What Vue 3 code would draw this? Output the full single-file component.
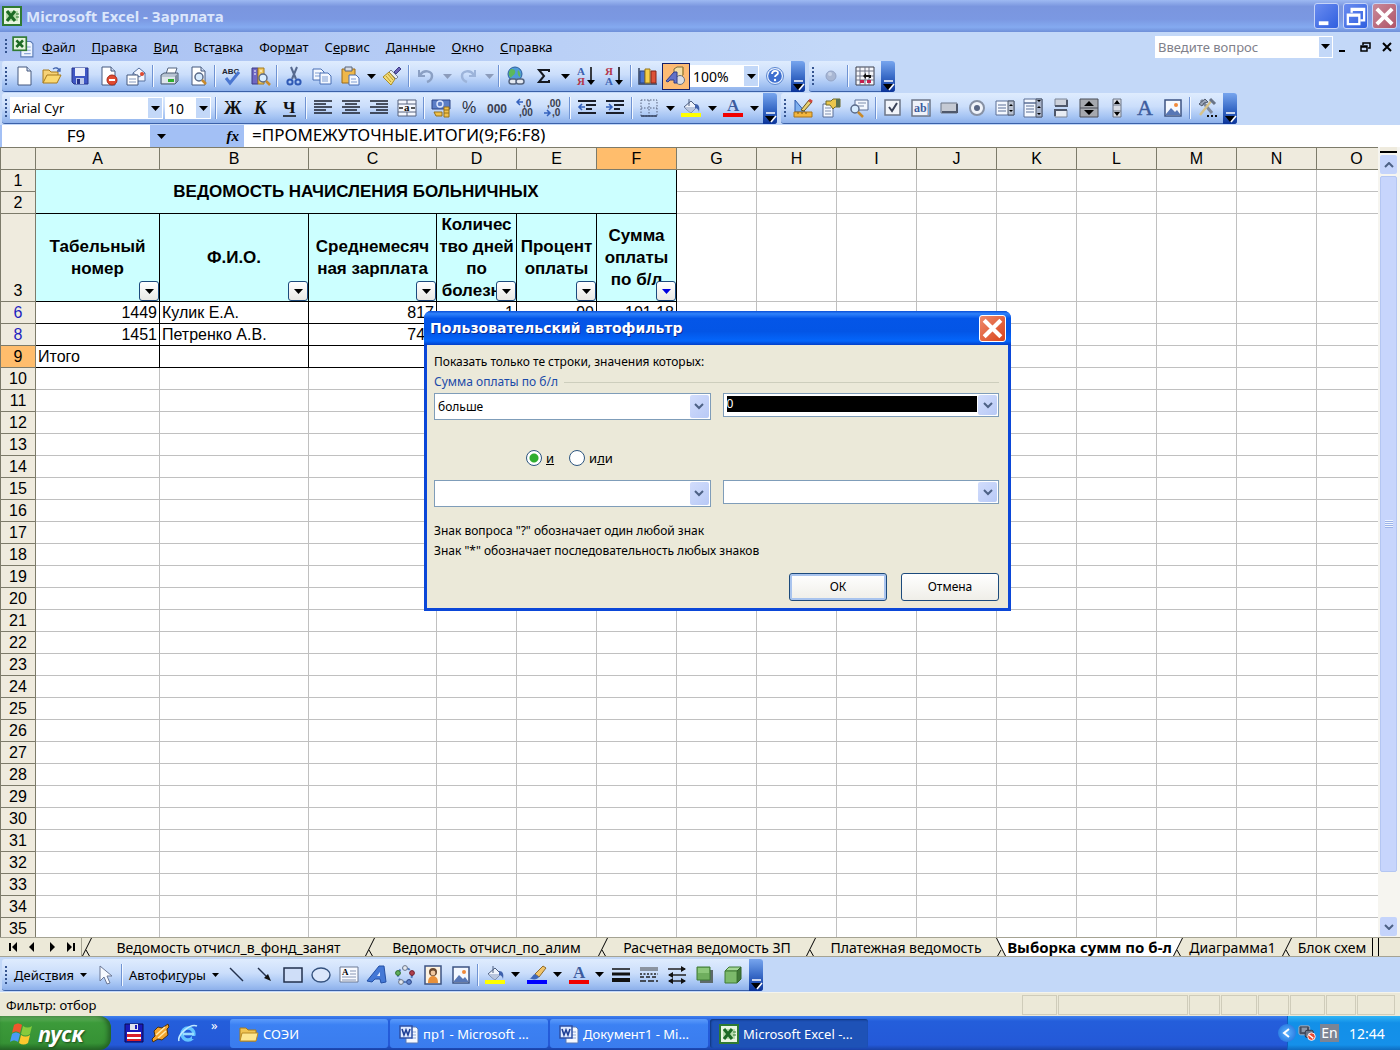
<script setup>
import { ref } from 'vue'

const paper = '<path d="M4 1h9l4 4v14H4z" fill="#fff" stroke="#44597f"/><path d="M13 1v4h4" fill="#cfdcf2" stroke="#44597f"/>'
const disk = '<path d="M2 2h16v16H4l-2-2z" fill="#3f57c4" stroke="#27348b"/><path d="M5 2h10v8H5z" fill="#e8edfb"/><path d="M6 12h8v6H6z" fill="#bcc8ea"/><path d="M7 13h3v5H7z" fill="#27348b"/>'
const bars = (rows, weight = 2) => rows.map(([y, x, w]) => `<path d="M${x + 1} ${y}h${w}" stroke="#1b1f2b" stroke-width="${weight}"/>`).join('')
const lens = (x, y) => `<circle cx="${x}" cy="${y}" r="4" fill="#d8ecff" stroke="#5a6a88" stroke-width="1.5"/><path d="M${x + 3} ${y + 3}l4 4" stroke="#c98a2b" stroke-width="2.5"/>`
const bucket = '<path d="M3 9l7-6 6 6-6 6z" fill="#eef3fb" stroke="#4a5d80"/><path d="M3 9h13l-6 6z" fill="#b9c6de"/><path d="M8 1v7" stroke="#4a5d80"/><path d="M14 6c4 0 5 3 4 8-1-3-2-4-4-4z" fill="#3f62ad"/>'
const picture = '<path d="M2 2h16v16H2z" fill="#f4f8ff" stroke="#3c5382" stroke-width="1.5"/><circle cx="13" cy="7" r="2" fill="#f0893a"/><path d="M3 16l5-6 4 4 2-2 3 4v1H3z" fill="#5877b5"/>'
const excel = '<rect x="1" y="1" width="18" height="18" fill="#e9f5e2" stroke="#2f7a32" stroke-width="2"/><path d="M4 5h12v10H4z" fill="#b9dcae"/><path d="M5 5l8 10M13 5L5 15" stroke="#1d6a25" stroke-width="3"/><path d="M14 8h3M14 11h3" stroke="#2f7a32"/>'
const excelDoc = '<path d="M8 5h9l2 2v12H8z" fill="#eef4ff" stroke="#5a7ab5"/><path d="M11 10h6M11 13h6M11 16h6" stroke="#8ba6d6"/><rect x="1" y="1" width="12" height="12" fill="#e4f3dc" stroke="#2f7a32" stroke-width="1.5"/><path d="M4 4l6 6M10 4l-6 6" stroke="#1d6a25" stroke-width="2.4"/>'
const word = '<path d="M7 3h10l2 2v14H7z" fill="#f4f8ff" stroke="#5a7ab5"/><path d="M12 8h5M12 11h5M12 14h5" stroke="#8ba6d6"/><rect x="1" y="2" width="12" height="12" fill="#dfe9ff" stroke="#2c4fa5" stroke-width="1.5"/><path d="M3 5l2 6 2-5 2 5 2-6" fill="none" stroke="#1f3f96" stroke-width="1.6"/>'

const icons = {
  excel, excelDoc, word, disk, picture,
  page: paper,
  open: '<path d="M1 17V4h6l2 2h7v3" fill="#f6d277" stroke="#a87a1c"/><path d="M1 17l4-8h14l-4 8z" fill="#fbd972" stroke="#a87a1c"/><path d="M11 3c3-2 5-1 6 1m1-2v3h-3" fill="none" stroke="#3f62ad" stroke-width="1.3"/>',
  perm: paper + '<circle cx="14" cy="14" r="5" fill="#e04a30" stroke="#a52a1a"/><path d="M11 14h6" stroke="#fff" stroke-width="2"/>',
  mail: '<path d="M7 7l6-5 6 5v8H7z" fill="#f4f7ff" stroke="#56709f"/><path d="M7 7l6 4 6-4" fill="none" stroke="#56709f"/><path d="M1 9h11v10H1z" fill="#fff" stroke="#44597f"/><path d="M3 13h7M3 16h7" stroke="#8498bd"/><circle cx="16" cy="8" r="2" fill="#e04a30"/>',
  print: '<path d="M6 8l2-6h9l-2 6z" fill="#fff" stroke="#55657f"/><path d="M1 9l3-2h14v8l-3 3H1z" fill="#b8c4d2" stroke="#4c5c74"/><path d="M2 11h13v6H2z" fill="#dfe6ec"/><path d="M8 13h6v3H8z" fill="#2fae2f"/><path d="M15 10l3-2v7l-3 2z" fill="#7f8da1"/>',
  preview: paper + lens(11, 11),
  spell: '<text x="0" y="8" font-family="Liberation Sans" font-size="8" font-weight="700" fill="#20242e">ABC</text><path d="M4 12l4 5 9-11" fill="none" stroke="#4a76d0" stroke-width="3"/>',
  research: '<path d="M2 2h6v16H2z" fill="#6f67c4" stroke="#3d3a86"/><path d="M8 2h6v16H8z" fill="#f2c75e" stroke="#a37a1f"/><path d="M4 5h2M4 8h2M10 5h2" stroke="#fff"/>' + lens(13, 12),
  cut: '<path d="M7 1l5 12M13 1L8 13" stroke="#56698e" stroke-width="2"/><circle cx="6" cy="16" r="2.6" fill="none" stroke="#2f59b5" stroke-width="2"/><circle cx="14" cy="16" r="2.6" fill="none" stroke="#2f59b5" stroke-width="2"/>',
  copy: '<path d="M1 3h8l3 3v8H1z" fill="#f4f8ff" stroke="#486fb4"/><path d="M3 7h6M3 10h5" stroke="#7f9dd2"/><path d="M8 7h8l3 3v8H8z" fill="#f4f8ff" stroke="#486fb4"/><path d="M10 11h6M10 13h6M10 15h6" stroke="#7f9dd2"/>',
  paste: '<path d="M2 3h13v14H2z" fill="#eeb74a" stroke="#9a6b19"/><path d="M5 1h7v4H5z" fill="#d7dce6" stroke="#596579"/><path d="M9 9h7l3 3v7H9z" fill="#f4f8ff" stroke="#486fb4"/><path d="M11 13h5M11 16h6" stroke="#7f9dd2"/>',
  brush: '<path d="M12 6l5-5 2 2-5 5z" fill="#6a63b8" stroke="#3d3a86"/><path d="M9 4l7 7-2 2-7-7z" fill="#e8ecf4" stroke="#7a859c"/><path d="M7 6l6 7-4 6-8-8z" fill="#f4dc78" stroke="#a98c25"/><path d="M4 10l5 6M6 8l5 6" stroke="#b99a30"/>',
  undo: '<path d="M3 4v6h6" fill="none" stroke="#8ba0c4" stroke-width="2"/><path d="M4 9c4-6 12-4 12 1 0 3-2 5-5 6" fill="none" stroke="#8ba0c4" stroke-width="2.5"/>',
  redo: '<path d="M17 4v6h-6" fill="none" stroke="#9db4da" stroke-width="2"/><path d="M16 9c-4-6-12-4-12 1 0 3 2 5 5 6" fill="none" stroke="#9db4da" stroke-width="2.5"/>',
  link: '<circle cx="9" cy="8" r="7" fill="#4f9ad8" stroke="#2b5f9c"/><path d="M5 3c3 0 5 1 4 4s-3 2-4 5c-3-3-3-6 0-9zM12 4c2 2 3 4 2 7-2-1-3-4-2-7z" fill="#5cb85a"/><rect x="3" y="13" width="8" height="5" rx="2.5" fill="#e5eaf2" stroke="#55647e" stroke-width="1.5"/><rect x="10" y="13" width="8" height="5" rx="2.5" fill="#e5eaf2" stroke="#55647e" stroke-width="1.5"/>',
  sum: '<path d="M15 6V4H5l5 6-5 6h10v-2" fill="none" stroke="#15181f" stroke-width="2"/>',
  sortA: '<text x="1" y="9" font-family="Liberation Serif" font-size="11" font-weight="700" fill="#3a5fb0">А</text><text x="1" y="19" font-family="Liberation Serif" font-size="11" font-weight="700" fill="#b5384a">Я</text><path d="M15 1v15" stroke="#111" stroke-width="1.6"/><path d="M11 14h8l-4 5z"/>',
  sortZ: '<text x="1" y="9" font-family="Liberation Serif" font-size="11" font-weight="700" fill="#b5384a">Я</text><text x="1" y="19" font-family="Liberation Serif" font-size="11" font-weight="700" fill="#3a5fb0">А</text><path d="M15 1v15" stroke="#111" stroke-width="1.6"/><path d="M11 14h8l-4 5z"/>',
  chart: '<path d="M1 2v16h18" fill="none" stroke="#33415e" stroke-width="1.5"/><path d="M2 5h5v12H2z" fill="#4b74cf" stroke="#27407e"/><path d="M7 3h5v14H7z" fill="#f5cf4a" stroke="#967418"/><path d="M13 5h5v12h-5z" fill="#dd5138" stroke="#842718"/>',
  drawing: '<path d="M8 3l3-2h6v8l-3 3H8z" fill="#f3e0a8" stroke="#7e6a3c"/><path d="M14 12l3-3V1" fill="none" stroke="#b18a3a"/><circle cx="14" cy="14" r="4.5" fill="#d9dde4" stroke="#69707e"/><path d="M0 15l8-9h3v11H8v-3H4l-2 2z" fill="#6272c8" stroke="#303c87"/>',
  help: '<circle cx="10" cy="10" r="8.5" fill="#e8f1ff" stroke="#5b86cf"/><circle cx="10" cy="10" r="6.8" fill="#3e6fd0"/><path d="M7 8c0-4 6-4 6-1 0 2-3 2-3 4" fill="none" stroke="#fff" stroke-width="1.8"/><circle cx="10" cy="14" r="1.2" fill="#fff"/>',
  record: '<circle cx="10" cy="10" r="5" fill="#a9b7d3" stroke="#94a4c6"/><circle cx="9" cy="8" r="2" fill="#c7d2e8"/>',
  macro: '<path d="M1 1h18v18H1z" fill="#f5f6fa" stroke="#3b3f4d"/><path d="M5 1v18M10 1v18M14 1v18M1 5h18M1 10h18M1 14h18" stroke="#6c7386"/><path d="M5 14h4v3H5zM12 14h4v3h-4z" fill="#c4204e"/><path d="M8 10l3-3v2h5v3h-2v-1h-3v2z" fill="#111"/>',
  bold: '<text x="1" y="16" font-family="Liberation Serif" font-size="18" font-weight="700" fill="#111">Ж</text>',
  italic: '<text x="3" y="16" font-family="Liberation Serif" font-size="18" font-weight="700" font-style="italic" fill="#111">К</text>',
  under: '<text x="4" y="15" font-family="Liberation Serif" font-size="17" font-weight="700" fill="#111">Ч</text><path d="M4 18h13" stroke="#111" stroke-width="1.5"/>',
  left: bars([[3, 0, 18], [6, 0, 12], [9, 0, 18], [12, 0, 12], [15, 0, 18]], 1.5),
  center: bars([[3, 0, 18], [6, 3, 12], [9, 0, 18], [12, 3, 12], [15, 0, 18]], 1.5),
  right: bars([[3, 0, 18], [6, 6, 12], [9, 0, 18], [12, 6, 12], [15, 0, 18]], 1.5),
  merge: '<path d="M1 2h18v16H1z" fill="#f5f8ff" stroke="#56637e"/><path d="M1 6h18M1 14h18M10 2v4M10 14v4" stroke="#56637e"/><path d="M2 10h4M14 10h4" stroke="#222" stroke-width="1.5"/><text x="7" y="13" font-family="Liberation Serif" font-size="11" font-weight="700" fill="#111">a</text>',
  currency: '<path d="M1 2h18v9H1z" fill="#5c7ec6" stroke="#2c4585"/><circle cx="9" cy="6" r="3" fill="none" stroke="#dce7ff" stroke-width="1.4"/><path d="M13 9h5v10h-5z" fill="#f2c24a" stroke="#94701b"/><path d="M13 12h5M13 15h5" stroke="#94701b"/><path d="M3 14h8v4H5z" fill="#f2c24a" stroke="#94701b"/>',
  percent: '<text x="3" y="15" font-family="Liberation Sans" font-size="16" fill="#2b3040">%</text>',
  zeros: '<text x="0" y="15" font-family="Liberation Sans" font-size="12" font-weight="700" fill="#3a4050">000</text>',
  inc: '<text x="8" y="9" font-family="Liberation Sans" font-size="10" font-weight="700" fill="#3a4050">,0</text><text x="4" y="18" font-family="Liberation Sans" font-size="10" font-weight="700" fill="#3a4050">,00</text><path d="M8 4H2m3-3L2 4l3 3" fill="none" stroke="#3562bd" stroke-width="1.5"/>',
  dec: '<text x="4" y="9" font-family="Liberation Sans" font-size="10" font-weight="700" fill="#3a4050">,00</text><text x="9" y="18" font-family="Liberation Sans" font-size="10" font-weight="700" fill="#3a4050">,0</text><path d="M1 15h6m-3-3l3 3-3 3" fill="none" stroke="#3562bd" stroke-width="1.5"/>',
  outdent: bars([[3, 0, 18], [7, 8, 10], [11, 8, 6], [15, 0, 18]]) + '<path d="M8 9H2m3-3L2 9l3 3" fill="none" stroke="#3562bd" stroke-width="1.6"/>',
  indent: bars([[3, 0, 18], [7, 8, 10], [11, 8, 6], [15, 0, 18]]) + '<path d="M1 9h6M4 6l3 3-3 3" fill="none" stroke="#3562bd" stroke-width="1.6"/>',
  borders: '<path d="M2 2h16v16H2zM10 2v16M2 10h16" fill="none" stroke="#56637e" stroke-dasharray="1.5 1.5"/><path d="M2 18h16" stroke="#33415e" stroke-width="1.5"/>',
  fill: bucket + '<path d="M0 15h20v4H0z" fill="#ffff00"/>',
  lineColor: '<path d="M8 9l8-8 3 2-7 9z" fill="#f0c36a" stroke="#8e6a2a"/><path d="M2 13c3 1 4-4 6-4l4 3c-2 3-6 3-10 1z" fill="#4068b8"/><path d="M0 15h20v4H0z" fill="#0000ff"/>',
  fontColor: '<text x="4" y="13" font-family="Liberation Serif" font-size="17" font-weight="700" fill="#3d5c9e">А</text><path d="M0 15h20v4H0z" fill="#f00000"/>',
  design: '<path d="M2 2v12h10z" fill="#7fb0ee" stroke="#2d5bb0"/><path d="M1 14h18v5H1z" fill="#f3b63e" stroke="#a8741a"/><path d="M5 14v2M9 14v2M13 14v2" stroke="#7e5613"/><path d="M8 12l8-10 3 2-8 9z" fill="#e9d173" stroke="#65541e"/><path d="M16 2l3 2" stroke="#d0453d" stroke-width="3"/>',
  props: '<path d="M2 6h10v13H2z" fill="#f4f8ff" stroke="#5b6f96"/><path d="M4 10h6M4 13h6M4 16h6" stroke="#7f8fae"/><path d="M5 3h5l2-2h7v8h-5l-2 2-3-4H5z" fill="#eac64b" stroke="#6f6a2c"/><path d="M15 1h4v8h-4z" fill="#5b7350"/>',
  code: '<path d="M6 2h13v10H6z" fill="#f4f8ff" stroke="#5b6f96"/><path d="M9 5h8M9 8h6" stroke="#7f8fae"/><circle cx="6" cy="11" r="4" fill="#d8ecff" stroke="#5a6a88" stroke-width="1.5"/><path d="M9 14l5 5" stroke="#c98a2b" stroke-width="2.5"/>',
  check: '<path d="M2 2h15v15H2z" fill="#f1f4fa" stroke="#6c7688" stroke-width="1.5"/><path d="M6 9l3 4 5-8" fill="none" stroke="#3a4258" stroke-width="2"/>',
  ab: '<path d="M1 2h18v16H1z" fill="#eef2fa" stroke="#6c7688" stroke-width="1.5"/><text x="3" y="14" font-family="Liberation Serif" font-size="12" font-weight="700" fill="#3d5c9e">ab|</text>',
  button: '<path d="M2 5h16v10H2z" fill="#c5cad4" stroke="#6c7688"/><path d="M3 14h15V6" fill="none" stroke="#4f586b" stroke-width="2"/>',
  radio: '<circle cx="10" cy="10" r="7" fill="#f1f4fa" stroke="#8791a4" stroke-width="2"/><circle cx="10" cy="10" r="3" fill="#5a6784"/>',
  listbox: '<path d="M1 3h18v14H1z" fill="#f4f8ff" stroke="#5b6f96"/><path d="M3 7h8M3 10h8M3 13h8" stroke="#5b6f96"/><path d="M13 3h6v14h-6z" fill="#b9c2d2" stroke="#4f586b"/><path d="M14 8l2-2 2 2zM14 12l2 2 2-2z"/>',
  combo: '<path d="M1 1h18v4H1zM1 5h18v14H1z" fill="#f4f8ff" stroke="#5b6f96"/><path d="M3 8h8M3 11h8M3 14h8" stroke="#5b6f96"/><path d="M13 1h6v18h-6z" fill="#a9b4cb" stroke="#4f586b"/><path d="M14 2l2 2 2-2zM14 10l2-2 2 2zM14 15l2 2 2-2z"/>',
  toggle: '<path d="M4 1h12v7H4z" fill="#cdd2dc" stroke="#7b8496"/><path d="M4 8h12V2" fill="none" stroke="#4f586b" stroke-width="2"/><path d="M4 12h12v7H4z" fill="#e8ecf3" stroke="#7b8496"/><path d="M4 18v-6h12" fill="none" stroke="#4f586b" stroke-width="2"/>',
  spin: '<path d="M1 1h18v18H1z" fill="#a5a8ae" stroke="#4b4f58"/><path d="M1 10h18" stroke="#4b4f58"/><path d="M5 8l5-5 5 5zM5 12l5 5 5-5z"/>',
  scroll: '<path d="M6 1h8v18H6z" fill="#d8dce4" stroke="#6c7688"/><path d="M6 7h8M6 13h8" stroke="#6c7688"/><path d="M7 6l3-4 3 4zM7 14l3 4 3-4z"/>',
  letter: '<text x="2" y="17" font-family="Liberation Serif" font-size="22" fill="#3d5c9e" stroke="#3d5c9e" stroke-width=".5">A</text>',
  tools: '<path d="M4 2l11 13" stroke="#7f899c" stroke-width="3"/><path d="M2 6l6-5 3 3-4 1-2 3z" fill="#9aa5b8" stroke="#515b6e"/><path d="M15 2L3 17" stroke="#d6c38c" stroke-width="2.4"/><path d="M13 1l5 5" stroke="#697488" stroke-width="3"/><path d="M10 18h2M14 18h2M18 18h2" stroke="#111" stroke-width="2"/>',
  cursor: '<path d="M5 1v15l4-4 3 7 3-1-3-7h5z" fill="#f7faff" stroke="#6a7795"/>',
  line: '<path d="M3 3l13 13" stroke="#22304c" stroke-width="1.4"/>',
  arrow: '<path d="M3 3l10 10" stroke="#22304c" stroke-width="1.4"/><path d="M16 16l-7-3 4-4z" fill="#111"/>',
  rect: '<path d="M1 3h18v14H1z" fill="#cfdef8" stroke="#22304c" stroke-width="1.5"/>',
  oval: '<ellipse cx="10" cy="10" rx="9" ry="7" fill="#dbe7fb" stroke="#33507c" stroke-width="1.4"/>',
  textbox: '<path d="M1 2h18v15H1z" fill="#f8faff" stroke="#6d7a95"/><text x="3" y="10" font-family="Liberation Serif" font-size="9" font-weight="700">A</text><path d="M11 6h6M11 9h6M3 12h14M3 15h14" stroke="#8796b4"/>',
  wordart: '<path d="M0 16L12 1h5l2 16-5 1-1-4H8l-3 3z" fill="#4478d6" stroke="#2450a5"/><path d="M10 11l3-4v4z" fill="#dbe8ff"/>',
  diagram: '<circle cx="10" cy="10" r="7" fill="none" stroke="#4e78bd" stroke-width="2" stroke-dasharray="3 2"/><circle cx="10" cy="3" r="2.4" fill="#e3e8f0" stroke="#6c7688"/><circle cx="3" cy="8" r="2.4" fill="#5fae5c" stroke="#2f6f2f"/><circle cx="17" cy="8" r="2.4" fill="#b0404c" stroke="#702030"/><circle cx="6" cy="17" r="2.4" fill="#e3e8f0" stroke="#6c7688"/><circle cx="14" cy="17" r="2.4" fill="#5a7fc8" stroke="#2c4585"/>',
  clip: '<path d="M2 1h16v18H2z" fill="#fdf3e1" stroke="#3c5382" stroke-width="1.5"/><path d="M5 18c0-5 2-7 5-7s5 2 5 7z" fill="#e8903a"/><circle cx="10" cy="7" r="4" fill="#6b4a30"/><circle cx="10" cy="8" r="2.4" fill="#f1c9a0"/>',
  weights: '<path d="M1 4h18" stroke="#111" stroke-width="1.5"/><path d="M1 9h18" stroke="#111" stroke-width="3"/><path d="M1 15h18" stroke="#111" stroke-width="4"/>',
  dashes: '<path d="M1 3h18M1 5h18" stroke="#444"/><path d="M1 9h18" stroke="#222" stroke-width="1.5" stroke-dasharray="2 1.5"/><path d="M1 12h18" stroke="#222" stroke-width="1.5" stroke-dasharray="4 2"/><path d="M1 16h18" stroke="#222" stroke-width="1.5" stroke-dasharray="6 2"/>',
  arrows: '<path d="M1 4h17M2 10h17M2 16h16" stroke="#222" stroke-width="1.5"/><path d="M14 1l5 3-5 3zM6 7l-5 3 5 3zM6 13l-5 3 5 3zM14 13l5 3-5 3z" fill="#111"/>',
  shadow: '<path d="M5 5h13v13H5z" fill="#5d6a6a"/><path d="M2 2h13v13H2z" fill="#6fae5e" stroke="#3f7a34"/><path d="M3 3h11v5H3z" fill="#8cc77a"/>',
  cube: '<path d="M2 6l4-4h12l-4 4z" fill="#a5d796" stroke="#3f7a34"/><path d="M14 6l4-4v12l-4 4z" fill="#417a38" stroke="#33622b"/><path d="M2 6h12v12H2z" fill="#7cba6b" stroke="#3f7a34"/>',
  folder: '<path d="M1 17V4h6l2 2h8v11z" fill="#f0c452" stroke="#a87a1c"/><path d="M3 9h16l-2 8H1z" fill="#fde690" stroke="#b98a24"/>',
  save2: '<path d="M1 1h18v18H1z" fill="#1a1ab8" stroke="#0a0a50"/><path d="M6 1h8v6H6z" fill="#dfe3ee"/><path d="M11 2h2v4h-2z" fill="#1a1ab8"/><path d="M3 9h14v9H3z" fill="#fff"/><path d="M3 11h14v3H3zM3 16h14v2H3z" fill="#d8202a"/>',
  pencil: '<path d="M3 8l4-4 4 1 6-4 1 3-2 2 1 6-6 5-4-1-5 3-1-3 3-3z" fill="#f2a32c" stroke="#4a3210"/><path d="M5 12L14 4M7 15l8-7" stroke="#ffe9a8" stroke-width="1.6"/>',
  ie: '<circle cx="10" cy="11" r="6" fill="none" stroke="#63c3ff" stroke-width="3.4"/><path d="M5 11h11" stroke="#9bdcff" stroke-width="2.6"/><path d="M14 13h5v3h-5z" fill="#245edb"/><path d="M1 18C-1 12 12 0 19 3" fill="none" stroke="#bfe9ff" stroke-width="1.6"/>',
  tray: '<rect x="1" y="2" width="12" height="10" rx="2" fill="#474f60" stroke="#aab5c8"/><path d="M4 4h6v5H4z" fill="#8c97aa"/><rect x="8" y="7" width="9" height="8" rx="2" fill="#6b7588" stroke="#2c3444"/><circle cx="15" cy="14" r="4.2" fill="#e84a34" stroke="#fff"/><path d="M12 12l5 4" stroke="#fff" stroke-width="1.5"/>',
}

const b = (icon, label, extra = {}) => ({ type: 'button', icon, label, ...extra })
const sep = { type: 'sep' }
const drop = { type: 'drop' }
const dim = { type: 'drop', dim: true }

const toolRows = [
  [
    [b('page', 'Создать'), b('open', 'Открыть'), b('disk', 'Сохранить'), b('perm', 'Разрешения'), b('mail', 'Сообщение'), sep,
      b('print', 'Печать'), b('preview', 'Предварительный просмотр'), sep, b('spell', 'Орфография'), b('research', 'Справочные материалы'), sep,
      b('cut', 'Вырезать'), b('copy', 'Копировать'), b('paste', 'Вставить'), drop, b('brush', 'Формат по образцу'), sep,
      b('undo', 'Отменить'), dim, b('redo', 'Вернуть'), dim, sep,
      b('link', 'Гиперссылка'), b('sum', 'Автосумма'), drop, b('sortA', 'По возрастанию'), b('sortZ', 'По убыванию'), sep,
      b('chart', 'Мастер диаграмм'), b('drawing', 'Рисование', { on: true }),
      { type: 'select', value: '100%', label: 'Масштаб', size: 'zoom' }, b('help', 'Помощь')],
    [b('record', 'Записать макрос'), sep, b('macro', 'Относительная ссылка')],
  ],
  [
    [{ type: 'select', value: 'Arial Cyr', label: 'Шрифт', size: 'font' }, { type: 'select', value: '10', label: 'Размер', size: 'points' }, sep,
      b('bold', 'Полужирный'), b('italic', 'Курсив'), b('under', 'Подчеркнутый'), sep,
      b('left', 'По левому краю'), b('center', 'По центру'), b('right', 'По правому краю'), b('merge', 'Объединить'), sep,
      b('currency', 'Денежный формат'), b('percent', 'Процентный формат'), b('zeros', 'Формат с разделителями'), b('inc', 'Увеличить разрядность'), b('dec', 'Уменьшить разрядность'), sep,
      b('outdent', 'Уменьшить отступ'), b('indent', 'Увеличить отступ'), sep,
      b('borders', 'Границы'), drop, b('fill', 'Цвет заливки'), drop, b('fontColor', 'Цвет шрифта'), drop],
    [b('design', 'Режим конструктора'), b('props', 'Свойства'), b('code', 'Исходный текст'), sep,
      b('check', 'Флажок'), b('ab', 'Поле'), b('button', 'Кнопка'), b('radio', 'Переключатель'), b('listbox', 'Список'), b('combo', 'Поле со списком'),
      b('toggle', 'Выключатель'), b('spin', 'Счетчик'), b('scroll', 'Полоса прокрутки'), b('letter', 'Надпись'), b('picture', 'Рисунок'), sep, b('tools', 'Другие элементы')],
  ],
]

const drawItems = [
  { type: 'menu', text: ['Дейс', 'т', 'вия'] }, b('cursor', 'Выбор объектов'), sep,
  { type: 'menu', text: ['Автофи', 'г', 'уры'] },
  b('line', 'Линия'), b('arrow', 'Стрелка'), b('rect', 'Прямоугольник'), b('oval', 'Овал'), b('textbox', 'Надпись'), b('wordart', 'WordArt'),
  b('diagram', 'Диаграмма'), b('clip', 'Картинка'), b('picture', 'Рисунок'), sep,
  b('fill', 'Цвет заливки'), drop, b('lineColor', 'Цвет линий'), drop, b('fontColor', 'Цвет шрифта'), drop,
  b('weights', 'Тип линии'), b('dashes', 'Тип штриха'), b('arrows', 'Вид стрелки'), b('shadow', 'Тень'), b('cube', 'Объем'),
]

const menus = [
  ['', 'Ф', 'айл'], ['', 'П', 'равка'], ['', 'В', 'ид'], ['Вст', 'а', 'вка'], ['Фор', 'м', 'ат'],
  ['С', 'е', 'рвис'], ['', 'Д', 'анные'], ['', 'О', 'кно'], ['', 'С', 'правка'],
]

const columns = 'ABCDEFGHIJKLMNO'.split('')
const heads = [
  ['Табельный', 'номер'], ['Ф.И.О.'], ['Среднемесяч', 'ная зарплата'],
  ['Количес', 'тво дней', 'по', 'болезни'], ['Процент', 'оплаты'], ['Сумма', 'оплаты', 'по б/л'],
]
const people = [
  { n: 6, cells: ['1449', 'Кулик Е.А.', '817', '1', '90', '101,18'] },
  { n: 8, cells: ['1451', 'Петренко А.В.', '745', '', '', ''] },
  { n: 9, cells: ['Итого', '', '', '', '', ''] },
]
const emptyRows = Array.from({ length: 26 }, (_, i) => i + 10)

const tabs = [
  { name: 'Ведомость отчисл_в_фонд_занят', width: 283 },
  { name: 'Ведомость отчисл_по_алим', width: 233 },
  { name: 'Расчетная ведомость ЗП', width: 208 },
  { name: 'Платежная ведомость', width: 190 },
  { name: 'Выборка сумм по б-л', width: 177, active: true },
  { name: 'Диаграмма1', width: 109 },
  { name: 'Блок схем', width: 90 },
]
const tasks = [
  { icon: 'folder', name: 'СОЭИ' },
  { icon: 'word', name: 'пр1 - Microsoft ...' },
  { icon: 'word', name: 'Документ1 - Mi...' },
  { icon: 'excel', name: 'Microsoft Excel -...', active: true },
]
const statusBoxes = [35, 130, 31, 36, 31, 35, 30, 38]
const quick = [['save2', 'Сохранение'], ['pencil', 'Проигрыватель'], ['ie', 'Internet Explorer']]

const join = ref('and')
const formula = ref('=ПРОМЕЖУТОЧНЫЕ.ИТОГИ(9;F6:F8)')
const cellName = ref('F9')
</script>

<template>
  <div class="desktop">
    <header class="titlebar">
      <svg class="app-icon" viewBox="0 0 20 20" v-html="icons.excel"></svg>
      <h1>Microsoft Excel - Зарплата</h1>
      <button class="win-btn" aria-label="Свернуть"><svg viewBox="0 0 24 24"><path d="M4 17h10v4H4z" fill="#fff" /></svg></button>
      <button class="win-btn" aria-label="Восстановить"><svg viewBox="0 0 24 24"><path d="M8 8V4h13v12h-4M8 5h13" fill="none" stroke="#fff" stroke-width="2.4" /><path d="M4 10h12v10H4zM4 11h12" fill="none" stroke="#fff" stroke-width="2.4" /></svg></button>
      <button class="win-btn close" aria-label="Закрыть"><svg viewBox="0 0 24 24"><path d="M4 4l16 16M20 4L4 20" stroke="#fff" stroke-width="4" /></svg></button>
    </header>

    <nav class="menubar">
      <i class="grip"></i>
      <svg class="doc-icon" viewBox="0 0 20 20" v-html="icons.excelDoc"></svg>
      <a v-for="m in menus" :key="m[2]" href="#">{{ m[0] }}<u>{{ m[1] }}</u>{{ m[2] }}</a>
      <div class="ask">
        <input type="text" placeholder="Введите вопрос" aria-label="Введите вопрос">
        <button aria-label="Список вопросов"><svg class="tri" viewBox="0 0 9 5"><path d="M0 0h9L4.500 5z" /></svg></button>
      </div>
      <div class="mdi">
        <button aria-label="Свернуть книгу"><svg viewBox="0 0 12 12"><path d="M2 10h6" stroke="#000" stroke-width="2" /></svg></button>
        <button aria-label="Восстановить книгу"><svg viewBox="0 0 12 12"><path d="M4 4V2h7v5H9M4 2h7M2 5h6v5H2zM2 6h6" fill="none" stroke="#000" stroke-width="1.5" /></svg></button>
        <button aria-label="Закрыть книгу"><svg viewBox="0 0 12 12"><path d="M2 2l8 8M10 2l-8 8" stroke="#000" stroke-width="2" /></svg></button>
      </div>
    </nav>

    <div v-for="(row, r) in toolRows" :key="r" class="tool-row">
      <div v-for="(bar, n) in row" :key="n" class="toolbar">
        <i class="grip"></i>
        <template v-for="(item, i) in bar" :key="i">
          <button v-if="item.type === 'button'" class="tool" :class="{ on: item.on }" :aria-label="item.label">
            <svg viewBox="0 0 20 20" v-html="icons[item.icon]"></svg>
          </button>
          <i v-else-if="item.type === 'sep'" class="sep"></i>
          <button v-else-if="item.type === 'drop'" class="drop" :class="{ dim: item.dim }" aria-label="Список">
            <svg class="tri" viewBox="0 0 9 5"><path d="M0 0h9L4.500 5z" /></svg>
          </button>
          <span v-else class="pick" :class="item.size">
            <select :aria-label="item.label"><option>{{ item.value }}</option></select>
            <span class="pick-arrow"><svg class="tri" viewBox="0 0 9 5"><path d="M0 0h9L4.500 5z" /></svg></span>
          </span>
        </template>
        <button class="more" aria-label="Параметры панелей"><svg viewBox="0 0 14 14"><path d="M3 3h9" stroke="#fff" stroke-width="1.5" /><path d="M2 6h10l-5 6z" /><path d="M8 12l5-6" stroke="#fff" stroke-width="1.5" /></svg></button>
      </div>
    </div>

    <div class="formula-bar">
      <input v-model="cellName" class="name-box" type="text" aria-label="Имя ячейки">
      <button class="name-drop" aria-label="Список имен"><svg class="tri" viewBox="0 0 9 5"><path d="M0 0h9L4.500 5z" /></svg></button>
      <span class="fx">fx</span>
      <input v-model="formula" class="formula" type="text" aria-label="Строка формул">
    </div>

    <main class="sheet">
      <div class="grid">
        <table>
          <colgroup>
            <col class="c-num"><col class="c-a"><col class="c-b"><col class="c-c"><col v-for="n in 12" :key="n" class="c-std">
          </colgroup>
          <thead>
            <tr><th></th><th v-for="c in columns" :key="c" :class="{ sel: c === 'F' }">{{ c }}</th></tr>
          </thead>
          <tbody>
            <tr>
              <th>1</th>
              <td class="banner" rowspan="2" colspan="6">ВЕДОМОСТЬ НАЧИСЛЕНИЯ БОЛЬНИЧНЫХ</td>
              <td v-for="n in 9" :key="n"></td>
            </tr>
            <tr><th>2</th><td v-for="n in 9" :key="n"></td></tr>
            <tr class="heads">
              <th>3</th>
              <td v-for="(h, i) in heads" :key="i" class="head">
                <div v-for="line in h" :key="line">{{ line }}</div>
                <button class="filter" :class="{ used: i === 5 }" aria-label="Автофильтр"><svg class="tri" viewBox="0 0 9 5"><path d="M0 0h9L4.500 5z" /></svg></button>
              </td>
              <td v-for="n in 9" :key="n"></td>
            </tr>
            <tr v-for="p in people" :key="p.n" class="data">
              <th :class="p.n === 9 ? 'sel' : 'filtered'">{{ p.n }}</th>
              <td v-for="(c, i) in p.cells" :key="i" class="ruled" :class="{ num: /^\d/.test(c) }">{{ c }}</td>
              <td v-for="n in 9" :key="n"></td>
            </tr>
            <tr v-for="n in emptyRows" :key="n"><th>{{ n }}</th><td v-for="c in 15" :key="c"></td></tr>
          </tbody>
        </table>
      </div>
      <div class="scrollbar">
        <i class="splitter"></i>
        <button aria-label="Вверх"><svg viewBox="0 0 10 6"><path d="M1 5l4-4 4 4" /></svg></button>
        <div class="thumb"><i></i></div>
        <button aria-label="Вниз"><svg viewBox="0 0 10 6"><path d="M1 1l4 4 4-4" /></svg></button>
      </div>
    </main>

    <div class="tabbar">
      <div class="tab-nav">
        <button aria-label="Первый лист"><svg viewBox="0 0 10 10"><path d="M1 1h2v8H1zM9 0v10L4 5z" /></svg></button>
        <button aria-label="Предыдущий лист"><svg viewBox="0 0 10 10"><path d="M7 0v10L2 5z" /></svg></button>
        <button aria-label="Следующий лист"><svg viewBox="0 0 10 10"><path d="M3 0v10l5-5z" /></svg></button>
        <button aria-label="Последний лист"><svg viewBox="0 0 10 10"><path d="M1 0v10l5-5zM7 1h2v8H7z" /></svg></button>
      </div>
      <button v-for="(t, i) in tabs" :key="t.name" class="tab" :class="{ active: t.active }" :style="{ width: t.width + 'px' }">
        <svg class="slash" viewBox="0 0 10 20">
          <path v-if="t.active" d="M0 0v20h5L10 20z" fill="#ece9d8" />
          <path v-if="tabs[i - 1] && tabs[i - 1].active" d="M0 0h10L0 20z" fill="#fff" />
          <path :d="t.active ? 'M0 0l10 20M5 13L1 20' : 'M10 0L0 20M4 13l4 7'" fill="none" stroke="#000" />
        </svg>
        <span>{{ t.name }}</span>
      </button>
      <i class="tab-end"></i>
    </div>

    <div class="tool-row drawing">
      <div class="toolbar">
        <i class="grip"></i>
        <template v-for="(item, i) in drawItems" :key="i">
          <button v-if="item.type === 'button'" class="tool" :aria-label="item.label">
            <svg viewBox="0 0 20 20" v-html="icons[item.icon]"></svg>
          </button>
          <i v-else-if="item.type === 'sep'" class="sep"></i>
          <button v-else-if="item.type === 'drop'" class="drop" aria-label="Список">
            <svg class="tri" viewBox="0 0 9 5"><path d="M0 0h9L4.500 5z" /></svg>
          </button>
          <button v-else class="text-menu"><span>{{ item.text[0] }}<u>{{ item.text[1] }}</u>{{ item.text[2] }}</span><svg class="tri small" viewBox="0 0 9 5"><path d="M0 0h9L4.500 5z" /></svg></button>
        </template>
        <button class="more" aria-label="Параметры панелей"><svg viewBox="0 0 14 14"><path d="M3 3h9" stroke="#fff" stroke-width="1.5" /><path d="M2 6h10l-5 6z" /><path d="M8 12l5-6" stroke="#fff" stroke-width="1.5" /></svg></button>
      </div>
    </div>

    <div class="status">
      <span>Фильтр: отбор</span>
      <i v-for="(w, i) in statusBoxes" :key="i" :style="{ width: w + 'px' }"></i>
    </div>

    <footer class="taskbar">
      <button class="start">
        <svg viewBox="0 0 24 24"><path d="M4 4c3-2 5-2 8 0l-2 8c-3-2-5-2-8 0z" fill="#f0562c" /><path d="M13 5c3 2 6 2 9 0l-2 8c-3 2-6 2-9 0z" fill="#86cb3c" /><path d="M2 13c3-2 5-2 8 0l-2 8c-3-2-5-2-8 0z" fill="#4a9bf5" /><path d="M11 14c3 2 6 2 9 0l-2 8c-3 2-6 2-9 0z" fill="#fcc82e" /></svg>
        <span>пуск</span>
      </button>
      <div class="quick">
        <button v-for="q in quick" :key="q[0]" :aria-label="q[1]"><svg viewBox="0 0 20 20" v-html="icons[q[0]]"></svg></button>
        <span>»</span>
      </div>
      <button v-for="t in tasks" :key="t.name" class="task" :class="{ active: t.active }">
        <svg viewBox="0 0 20 20" v-html="icons[t.icon]"></svg><span>{{ t.name }}</span>
      </button>
      <div class="tray">
        <button class="tray-toggle" aria-label="Скрытые значки"><svg viewBox="0 0 18 18"><path d="M11 5L6 9l5 4" fill="none" stroke="#fff" stroke-width="2" /></svg></button>
        <svg class="tray-icon" viewBox="0 0 20 20" v-html="icons.tray"></svg>
        <span class="lang">En</span>
        <time>12:44</time>
      </div>
    </footer>

    <section class="dialog" role="dialog" aria-labelledby="dlg-title">
      <div class="dlg-title">
        <h2 id="dlg-title">Пользовательский автофильтр</h2>
        <button aria-label="Закрыть окно"><svg viewBox="0 0 24 24"><path d="M4 4l16 16M20 4L4 20" stroke="#fff" stroke-width="4" /></svg></button>
      </div>
      <form class="dlg-body" @submit.prevent>
        <p>Показать только те строки, значения которых:</p>
        <div class="group-name"><span>Сумма оплаты по б/л</span></div>
        <div class="pair">
          <span class="combo tall"><select aria-label="Условие 1"><option>больше</option></select><i><svg viewBox="0 0 10 7"><path d="M1 1l4 4 4-4" /></svg></i></span>
          <span class="combo marked"><select aria-label="Значение 1"><option>0</option></select><i><svg viewBox="0 0 10 7"><path d="M1 1l4 4 4-4" /></svg></i></span>
        </div>
        <div class="radios">
          <label><input v-model="join" type="radio" name="join" value="and"><u>и</u></label>
          <label><input v-model="join" type="radio" name="join" value="or"><span>и<u>л</u>и</span></label>
        </div>
        <div class="pair">
          <span class="combo tall"><select aria-label="Условие 2"><option></option></select><i><svg viewBox="0 0 10 7"><path d="M1 1l4 4 4-4" /></svg></i></span>
          <span class="combo"><select aria-label="Значение 2"><option></option></select><i><svg viewBox="0 0 10 7"><path d="M1 1l4 4 4-4" /></svg></i></span>
        </div>
        <div class="hints">
          <p>Знак вопроса "?" обозначает один любой знак</p>
          <p>Знак "*" обозначает последовательность любых знаков</p>
        </div>
        <div class="actions">
          <button class="default">ОК</button>
          <button>Отмена</button>
        </div>
      </form>
    </section>
  </div>
</template>

<style>
html, body, #app { height: 100%; }
body { margin: 0; overflow: hidden; }
</style>

<style scoped>
.desktop, .desktop * { box-sizing: border-box; }
.desktop {
  position: relative;
  display: flex;
  flex-direction: column;
  height: 100%;
  overflow: hidden;
  background: #c3d8f8;
  color: #000;
  font: 13px "Noto Sans", sans-serif;
}
button, input, select { margin: 0; padding: 0; border: 0; background: none; color: inherit; font: inherit; outline: 0; }
select { appearance: none; }
svg { display: block; }
h1, h2, p { margin: 0; }
.tri { width: 9px; height: 5px; }

.titlebar {
  display: flex;
  align-items: center;
  gap: 4px;
  height: 32px;
  flex: none;
  padding: 0 3px 0 2px;
  background: linear-gradient(#9db9f2, #7a96df 20%, #7b98e2 60%, #84aaf0 85%, #6f8fd8);
}
.app-icon { width: 20px; height: 20px; }
.titlebar h1 { flex: 1; color: #dbe6fb; font: 700 15px "Noto Sans", sans-serif; }
.win-btn { width: 25px; height: 26px; flex: none; border: 1px solid #c5d4f8; border-radius: 3px; background: linear-gradient(135deg, #6a8cf0, #2f5fdf); }
.win-btn.close { background: linear-gradient(135deg, #c88a9a, #b05468); }

.menubar { display: flex; align-items: center; height: 29px; flex: none; padding-right: 7px; background: linear-gradient(90deg, #a8c0f2, #c3d8f8 60%); }
.grip { width: 3px; height: 16px; flex: none; margin: 0 4px 0 5px; background: repeating-linear-gradient(#35548f 0 2px, transparent 2px 4px); background-size: 2px 100%; background-repeat: no-repeat; }
.doc-icon { width: 22px; height: 22px; margin-right: 8px; }
.menubar a { margin-right: 16px; color: #000; text-decoration: none; }
.ask { display: flex; width: 178px; height: 22px; margin-left: auto; border: 1px solid #fff; background: #fff; }
.ask input { flex: 1; min-width: 0; padding-left: 2px; }
.ask input::placeholder { color: #80808a; opacity: 1; }
.ask button { display: grid; place-items: center; width: 13px; background: #c3d8f8; }
.mdi { display: flex; gap: 10px; padding-left: 4px; }
.mdi button { width: 12px; height: 12px; }

.tool-row { display: flex; gap: 4px; flex: none; height: 31px; margin-bottom: 1px; padding-left: 2px; }
.toolbar {
  display: flex;
  align-items: center;
  border-bottom: 1px solid #3b61a8;
  border-radius: 3px;
  background: linear-gradient(#dfecfe, #cbdefb 45%, #a4c3f3 80%, #8db0ea);
}
.toolbar .grip { margin: 0 2px 0 3px; height: 18px; }
.tool { display: grid; place-items: center; width: 28px; height: 27px; flex: none; }
.tool svg { width: 20px; height: 20px; overflow: visible; }
.tool.on { border: 1px solid #14206c; background: #fdbb74; }
.sep { width: 2px; height: 22px; flex: none; margin: 0 2px; border-left: 1px solid #6f93d3; border-right: 1px solid #f3f8ff; }
.drop { display: grid; place-items: center; width: 14px; height: 26px; flex: none; }
.drop.dim { fill: #8c9cbb; }
.more { align-self: stretch; display: flex; align-items: flex-end; width: 14px; flex: none; margin: 0 0 -1px 2px; border-radius: 0 3px 3px 0; background: linear-gradient(#77a5ee, #3a6cc8 50%, #0b349a); }
.more svg { width: 14px; height: 14px; }
.pick { display: flex; height: 22px; margin-right: 2px; border: 1px solid #fff; background: #fff; }
.pick select { flex: 1; min-width: 0; padding-left: 2px; }
.pick-arrow { display: grid; place-items: center; width: 14px; background: #c3d8f8; }
.pick.zoom { width: 69px; font-size: 14px; }
.pick.font { width: 153px; }
.pick.points { width: 46px; font-size: 14px; }

.formula-bar { display: flex; height: 22px; flex: none; padding-left: 2px; background: #a3c0f5; font: 17px "Noto Sans", sans-serif; }
.name-box { width: 148px; padding-bottom: 2px; background: #fff; text-align: center; }
.name-drop { display: grid; place-items: center; width: 23px; }
.fx { width: 71px; padding-right: 5px; text-align: right; font: italic 700 15px/22px "Liberation Serif", serif; }
.formula { flex: 1; min-width: 0; padding: 0 0 4px 8px; background: #fff; }

.sheet { display: flex; flex: 1; min-height: 0; background: #fff; }
.grid { flex: 1; min-width: 0; overflow: hidden; }
table { width: 1397px; border-collapse: separate; border-spacing: 0; table-layout: fixed; font: 16px/20px "Liberation Sans", sans-serif; }
.c-num { width: 36px; }
.c-a { width: 124px; }
.c-b { width: 149px; }
.c-c { width: 128px; }
.c-std { width: 80px; }
th { padding: 0; border: 0 solid #7d7b6a; border-width: 0 1px 1px 0; background: #efebde; font-weight: 400; }
thead th { height: 23px; border-top-width: 1px; }
th:first-child { border-left-width: 1px; }
td { height: 22px; padding: 0 2px; border: 0 solid #c0c0c0; border-width: 0 1px 1px 0; white-space: nowrap; overflow: hidden; }
th.sel { background: #ffbd6c; }
th.filtered { color: #1f1fbe; }
.banner { border-color: #000; background: #ccffff; font-size: 17px; font-weight: 700; text-align: center; }
.heads th { vertical-align: bottom; }
.heads td { height: 88px; }
.head { position: relative; padding: 0; border-color: #000; background: #ccffff; font-size: 17px; font-weight: 700; line-height: 22px; text-align: center; vertical-align: middle; }
.head div:nth-of-type(4) { height: 21px; }
.filter { position: absolute; right: 0; bottom: 0; display: grid; place-items: center; width: 20px; height: 20px; border: 1px solid #1c4a7c; border-radius: 3px; background: linear-gradient(#fff, #e8e8e4); }
.filter.used { fill: #0000e0; }
.ruled { border-color: #000; }
.num { text-align: right; }

.scrollbar { display: flex; flex-direction: column; gap: 2px; width: 22px; flex: none; padding: 0 3px 1px 2px; background: #f6f5f0; }
.splitter { height: 6px; border-bottom: 2px solid #000; background: #efebde; }
.scrollbar button { display: grid; place-items: center; height: 19px; flex: none; border-radius: 2px; background: #c5d4fb; }
.scrollbar svg { width: 10px; height: 6px; fill: none; stroke: #4d6185; stroke-width: 2; }
.thumb { display: grid; place-items: center; flex: 1; margin-bottom: 43px; border: 1px solid #b4c6f2; border-radius: 2px; background: #c7d5fc; }
.thumb i { width: 8px; height: 8px; background: repeating-linear-gradient(#eef4fe 0 1px, #9bb2e8 1px 2px); }

.tabbar { display: flex; height: 20px; flex: none; padding-left: 3px; border-top: 1px solid #a5a393; border-bottom: 1px solid #a5a393; background: #ece9d8; font-size: 14px; }
.tab-nav { display: flex; width: 79px; flex: none; border-right: 1px solid #a5a393; }
.tab-nav button { display: grid; place-items: center; width: 20px; }
.tab-nav svg { width: 10px; height: 10px; }
.tab { display: flex; align-items: center; min-width: 0; height: 18px; overflow: hidden; white-space: nowrap; }
.tab span { flex: 1; text-align: center; }
.slash { width: 10px; height: 20px; flex: none; }
.tab.active { background: #fff; font-weight: 700; font-size: 15px; }
.tab-end { width: 7px; border: 0 solid #000; border-width: 0 1px; }

.drawing { height: 32px; margin: 2px 0 1px; }
.text-menu { display: flex; align-items: center; gap: 6px; padding: 0 4px; }
.tri.small { width: 7px; height: 4px; }

.status { display: flex; align-items: center; gap: 1px; height: 24px; flex: none; padding: 0 5px 0 6px; border-top: 1px solid #f5f4ec; background: #ece9d8; }
.status span { margin-right: auto; }
.status i { height: 20px; border: 1px solid #cfccba; }

.taskbar { display: flex; align-items: stretch; height: 34px; flex: none; background: linear-gradient(#3f80ee, #245edb 15%, #2459d8 85%, #1941a5); color: #fff; }
.start { display: flex; align-items: center; gap: 4px; width: 111px; padding-left: 10px; border-radius: 0 12px 12px 0; background: linear-gradient(#6cb867, #3c9a3a 20%, #369235 80%, #256a26); box-shadow: inset -3px 0 5px #245f26; font: italic 700 22px "Noto Sans", sans-serif; text-shadow: 1px 1px 2px #1c4a1c; }
.start svg { width: 24px; height: 24px; }
.quick { display: flex; align-items: center; width: 119px; padding-left: 9px; }
.quick button { display: grid; place-items: center; width: 27px; height: 24px; }
.quick svg { width: 20px; height: 20px; }
.quick span { align-self: flex-start; margin-left: 10px; }
.task { display: flex; align-items: center; gap: 4px; width: 158px; margin: 3px 2px 2px 0; padding-left: 9px; border-radius: 3px; background: linear-gradient(#5c9bfb, #3c81f3 20%, #3a7cee); white-space: nowrap; }
.task svg { width: 20px; height: 20px; flex: none; }
.task.active { background: #1e52b7; box-shadow: inset 1px 1px 2px #103478; }
.tray { display: flex; align-items: center; width: 113px; margin-left: auto; border-left: 1px solid #0d5fc0; background: linear-gradient(#30b4f5, #1290e8 20%, #1590ea 85%, #0e6cc0); font-size: 14px; }
.tray-toggle { width: 18px; height: 18px; margin: 0 2px 0 -10px; border-radius: 50%; background: radial-gradient(#5cb4ff, #1a68d8); }
.tray-icon { width: 18px; height: 18px; }
.lang { width: 19px; margin: 0 10px 0 4px; background: #7c8494; text-align: center; line-height: 18px; }

.dialog { position: absolute; left: 424px; top: 311px; width: 587px; border: 3px solid #0b47d8; border-top: 0; border-radius: 7px 7px 0 0; box-shadow: inset -1px -1px #00138c; background: #0b47d8; font-size: 12px; }
.dlg-title { display: flex; align-items: center; height: 34px; margin: 0 -3px; padding: 0 5px 0 6px; border-radius: 7px 7px 0 0; background: linear-gradient(#0a4fd6, #2f82fb 8%, #0456e8 22%, #0355e6 60%, #0466fb 88%, #0340c8); }
.dlg-title h2 { flex: 1; color: #fff; font: 700 14px "DejaVu Sans", sans-serif; text-shadow: 1px 1px #0a2a90; }
.dlg-title button { width: 27px; height: 27px; border: 1px solid #fff; border-radius: 3px; background: linear-gradient(135deg, #ee8a6c, #d8441c); }
.dlg-body { padding: 7px 9px 7px 7px; background: #ebe9d9; line-height: 20px; }
.group-name { display: flex; align-items: center; gap: 6px; margin-bottom: 1px; color: #1b4aa8; }
.group-name::after { content: ""; flex: 1; height: 1px; background: #cdcebd; }
.pair { display: flex; align-items: flex-start; gap: 12px; height: 27px; }
.combo { display: flex; flex: 1; height: 24px; padding: 1px; border: 1px solid #7f9db9; background: #fff; }
.combo.tall { height: 27px; }
.combo select { flex: 1; min-width: 0; padding-left: 2px; }
.combo i { display: grid; place-items: center; width: 19px; border-radius: 2px; background: linear-gradient(135deg, #d2ddfc, #b8c9f6); }
.combo svg { width: 10px; height: 7px; fill: none; stroke: #4d6185; stroke-width: 2; }
.combo.marked select { height: 16px; margin: 1px 1px 0 2px; padding-left: 0; background: #000; color: #fff; line-height: 16px; }
.radios { display: flex; align-items: center; gap: 15px; height: 20px; margin: 28px 0 12px 92px; font-size: 13px; }
.radios label { display: flex; align-items: center; gap: 4px; }
.radios input { appearance: none; width: 16px; height: 16px; border: 1px solid #2c5580; border-radius: 50%; background: #fff; }
.radios input:checked { background: radial-gradient(circle, #2fae2f 0 4px, #fff 5px); }
.hints { margin-top: 14px; }
.actions { display: flex; justify-content: flex-end; gap: 14px; margin-top: 12px; }
.actions button { width: 98px; height: 28px; border: 1px solid #1c4a7c; border-radius: 3px; background: linear-gradient(#fff, #efeee8); }
.actions .default { box-shadow: inset 0 0 0 2px #a9c4ee; }
</style>
